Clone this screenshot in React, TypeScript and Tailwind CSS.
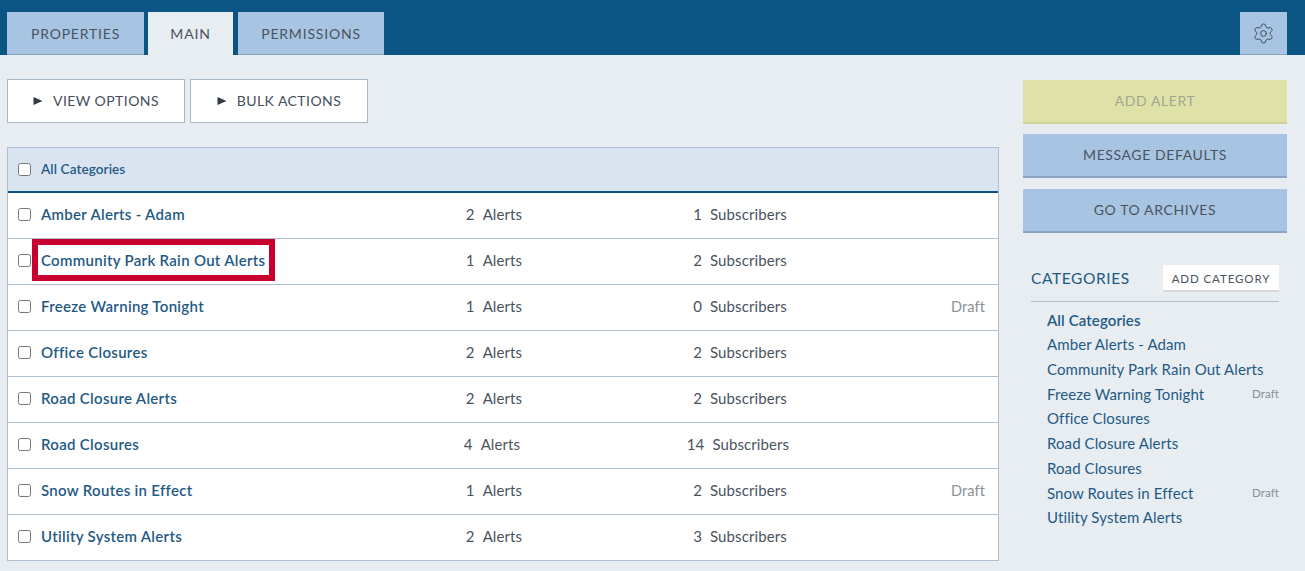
import React from "react";
import { Settings } from "lucide-react";

const rows = [
  { name: "Amber Alerts - Adam", a: 2, s: 1 },
  { name: "Community Park Rain Out Alerts", a: 1, s: 2 },
  { name: "Freeze Warning Tonight", a: 1, s: 0, draft: true },
  { name: "Office Closures", a: 2, s: 2 },
  { name: "Road Closure Alerts", a: 2, s: 2 },
  { name: "Road Closures", a: 4, s: 14, shift: true },
  { name: "Snow Routes in Effect", a: 1, s: 2, draft: true },
  { name: "Utility System Alerts", a: 2, s: 3 },
];

const side = [
  { name: "Amber Alerts - Adam" },
  { name: "Community Park Rain Out Alerts" },
  { name: "Freeze Warning Tonight", draft: true },
  { name: "Office Closures" },
  { name: "Road Closure Alerts" },
  { name: "Road Closures" },
  { name: "Snow Routes in Effect", draft: true },
  { name: "Utility System Alerts" },
];

function Tab({ label, active, w }: { label: string; active?: boolean; w: string }) {
  return (
    <div
      className={
        "h-[43px] flex items-center justify-center text-[14px] tracking-[0.8px] text-[#4a5360] " +
        w +
        (active ? " bg-[#e8edf2]" : " bg-[#a7c5e3] border-b border-[#8aa5c2]")
      }
    >
      {label}
    </div>
  );
}

function OptionButton({ label, w }: { label: string; w: string }) {
  return (
    <button className={"h-[44px] pb-[2px] bg-white border border-[#a9b8c9] flex items-center justify-center gap-[10px] text-[14px] tracking-[0.45px] text-[#454e5b] " + w}>
      <svg width="10" height="10" viewBox="0 0 10 10" className="mt-[2px]">
        <polygon points="0.5,1 9.5,5 0.5,9" fill="#333a44" />
      </svg>
      {label}
    </button>
  );
}

function SideButton({ label, disabled, mt }: { label: string; disabled?: boolean; mt?: string }) {
  return (
    <button
      className={
        "w-full h-[44px] pb-[1px] flex items-center justify-center text-[14px] tracking-[0.6px] border-b-2 " +
        (mt ?? "") +
        (disabled
          ? " bg-[#dfe2a6] border-[#cfd09c] text-[#a3a594]"
          : " bg-[#a7c5e3] border-[#8aa5c2] text-[#4a5360]")
      }
    >
      {label}
    </button>
  );
}

export default function App() {
  return (
    <div className="w-[1305px] h-[571px] overflow-hidden bg-[#e8edf2] font-['Lato','Open_Sans',sans-serif]">
      <header className="h-[55px] bg-[#0b5585] pt-[12px] pl-[7px] pr-[18px] flex items-start">
        <Tab label="PROPERTIES" w="w-[137px]" />
        <div className="w-[4px]" />
        <Tab label="MAIN" active w="w-[85px]" />
        <div className="w-[5px]" />
        <Tab label="PERMISSIONS" w="w-[146px]" />
        <div className="ml-auto w-[47px] h-[43px] bg-[#a7c5e3] border-b border-[#8aa5c2] flex items-center justify-center">
          <Settings size={23} strokeWidth={1} className="text-[#3c4552]" />
        </div>
      </header>

      <div className="flex pl-[7px] pr-[18px]">
        <main className="w-[992px] pt-[24px]">
          <div className="flex gap-[5px]">
            <OptionButton label="VIEW OPTIONS" w="w-[178px]" />
            <OptionButton label="BULK ACTIONS" w="w-[178px]" />
          </div>
          <div className="relative mt-[24px] border border-[#aebfd1] bg-white">
            <div className="h-[45px] bg-[#dae4f0] border-b-2 border-[#0b5585] flex items-center pl-[10px]">
              <input type="checkbox" className="w-[13px] h-[13px] m-0" />
              <span className="ml-[10px] text-[13.5px] font-semibold tracking-[0.1px] text-[#1f5a85]">All Categories</span>
            </div>
            {rows.map((r, i) => (
              <div
                key={r.name}
                className={
                  "grid grid-cols-[23px_339px_228px_264px_1fr] items-center pl-[10px] pr-[13px] pb-[2px] text-[15px] tracking-[0.1px]" +
                  (i < rows.length - 1 ? " h-[46px] border-b border-[#aebfd1]" : " h-[45px]")
                }
              >
                <input type="checkbox" className="w-[13px] h-[13px] m-0" />
                <span className="font-semibold text-[#1f5a85] tracking-[0.3px] whitespace-nowrap">{r.name}</span>
                <div className={"flex justify-center gap-[8px] text-[#4a5360]" + (r.shift ? " pr-[4px]" : "")}>
                  <span>{r.a}</span>
                  <span>Alerts</span>
                </div>
                <div className={"flex justify-center gap-[8px] text-[#4a5360]" + (r.shift ? " pr-[4px]" : "")}>
                  <span>{r.s}</span>
                  <span>Subscribers</span>
                </div>
                <span className="text-right text-[14.5px] text-[#8b8f96]">{r.draft ? "Draft" : ""}</span>
              </div>
            ))}
            <div className="absolute left-[24px] top-[91px] w-[243px] h-[42px] border-[6px] border-[#c8002d]" />
          </div>
        </main>

        <aside className="ml-[24px] w-[264px] pt-[25px]">
          <SideButton label="ADD ALERT" disabled />
          <SideButton label="MESSAGE DEFAULTS" mt="mt-[10px]" />
          <SideButton label="GO TO ARCHIVES" mt="mt-[11px]" />
          <div className="mx-[8px] mt-[32px]">
            <div className="flex items-center justify-between h-[27px] pb-[9px] border-b border-[#aebfd1] box-content">
              <span className="text-[15.5px] tracking-[0.6px] text-[#1f5a85]">CATEGORIES</span>
              <button className="w-[116px] h-[27px] pt-[2px] bg-white border-b-2 border-[#d5d8dc] text-[11.5px] tracking-[0.9px] text-[#4a5360]">
                ADD CATEGORY
              </button>
            </div>
            <ul className="mt-[6px] pl-[16px] text-[15px] tracking-[0.1px] text-[#1f5a85]">
              <li className="h-[24px] leading-[24px] font-semibold">All Categories</li>
              {side.map((s) => (
                <li key={s.name} className="h-[24.75px] leading-[24.75px] flex justify-between items-center whitespace-nowrap">
                  <span>{s.name}</span>
                  {s.draft && <span className="text-[11.5px] text-[#8b8f96]">Draft</span>}
                </li>
              ))}
            </ul>
          </div>
        </aside>
      </div>
    </div>
  );
}
